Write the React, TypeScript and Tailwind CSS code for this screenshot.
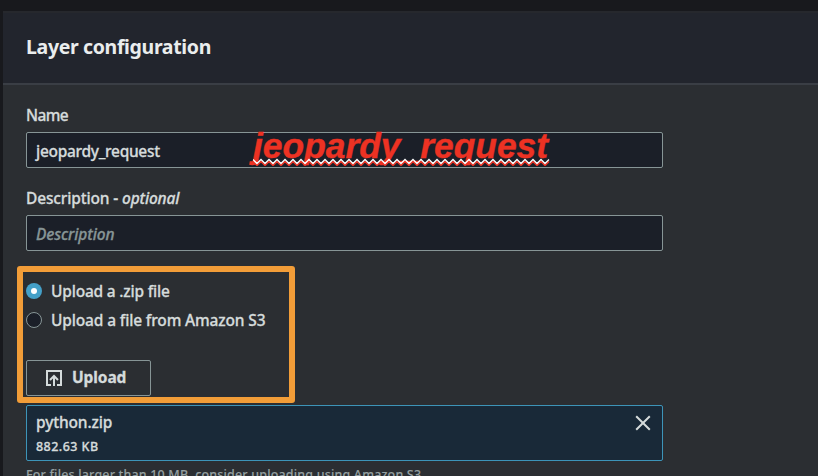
import React from 'react';

const squiggle = Array.from({ length: 75 }, (_, i) => `${i === 0 ? 'M' : 'L'}${i * 4} ${i % 2 === 0 ? 1.5 : 5.5}`).join(' ');

function UploadIcon() {
  return (
    <svg width="16" height="16" viewBox="0 0 16 16" fill="none" stroke="#d5dbdb" strokeWidth="2" className="block shrink-0">
      <path d="M5 15H1V1h14v14h-4" />
      <path d="M8 16V6M4 10l4-4 4 4" />
    </svg>
  );
}

export default function App() {
  return (
    <div className="relative h-[476px] w-[818px] overflow-hidden bg-[#18191d] pl-[3px] pt-[11px] font-['Noto_Sans',sans-serif] text-[#d5dbdb]">
      <section className="h-[465px] bg-[#2b2e32]">
        <header className="flex h-[74px] items-center border-b-2 border-t-2 border-b-[#3a3e45] border-t-[#26282d] bg-[#22252d] pb-[3px] pl-[23px]">
          <h2 className="whitespace-nowrap text-[19.5px] font-bold leading-6 tracking-[-0.35px] text-[#eaeded]">Layer configuration</h2>
        </header>
        <div className="flex w-[660px] flex-col pl-[23px] text-[15.5px] font-medium [-webkit-text-stroke:0.3px]">
          <label className="mt-[19px] h-[22px] leading-[22px] tracking-[-0.6px]">Name</label>
          <div className="mt-[6px] flex h-[36px] items-center rounded-[2px] border border-[#879596] bg-[#1b1f28] pl-[9px] pt-[3px]">
            <span className="tracking-[-0.3px]">jeopardy_request</span>
          </div>
          <label className="mt-[19px] h-[22px] whitespace-nowrap leading-[22px] tracking-[-0.15px]">
            Description - <i>optional</i>
          </label>
          <div className="mt-[6px] flex h-[36px] items-center rounded-[2px] border border-[#879596] bg-[#1b1f28] pl-[9px] pt-[3px]">
            <i className="tracking-[-0.1px] text-[#879596]">Description</i>
          </div>
          <div className="mt-[29px] flex h-[22px] items-center gap-[9px]">
            <span className="flex size-4 items-center justify-center rounded-full bg-[#44a0c8]">
              <span className="size-[6px] rounded-full bg-white" />
            </span>
            <span className="pt-px tracking-[-0.2px]">Upload a .zip file</span>
          </div>
          <div className="mt-[7px] flex h-[22px] items-center gap-[9px]">
            <span className="size-4 rounded-full border border-[#879596] bg-[#1b1f28]" />
            <span className="pt-px tracking-[-0.15px]">Upload a file from Amazon S3</span>
          </div>
          <button className="mt-[29px] flex h-[36px] w-[125px] items-center gap-[10px] rounded-[2px] border border-[#879596] pl-[19px] font-bold">
            <UploadIcon />
            <span className="-mt-px tracking-[-0.1px]">Upload</span>
          </button>
          <div className="mt-[9px] flex h-[56px] justify-between rounded-[2px] border border-[#3d94b8] bg-[#192938] pl-[9px] pr-[11px]">
            <div>
              <div className="mt-[5px] h-[22px] leading-[22px] tracking-[-0.15px]">python.zip</div>
              <div className="mt-[5px] h-[18px] text-[12.5px] leading-[18px] tracking-[0.45px]">882.63 KB</div>
            </div>
            <svg width="16" height="16" viewBox="0 0 16 16" stroke="#d5dbdb" strokeWidth="2" className="mt-[9px]">
              <path d="M1.2 1.2l13.6 13.6M14.8 1.2L1.2 14.8" />
            </svg>
          </div>
          <p className="mt-[5px] whitespace-nowrap text-[12.5px] leading-[18px] tracking-[0.17px] text-[#95a0a1] [-webkit-text-stroke:0.1px]">For files larger than 10 MB, consider uploading using Amazon S3.</p>
        </div>
      </section>
      <div className="absolute left-[248px] top-[125px] h-[41px] w-[310px] overflow-hidden font-['Liberation_Sans',Arial,sans-serif] text-[#ed3223]">
        <div className="pl-[5px] pt-[1px] text-[35.4px] font-bold italic leading-[40px] [-webkit-text-stroke:0.4px]">jeopardy_request</div>
        <svg width="300" height="8" viewBox="0 0 300 8" fill="none" className="absolute left-[5px] top-[33px]">
          <path d={squiggle} stroke="#ed3223" strokeWidth="1.5" transform="translate(0 2)" />
          <path d={squiggle} stroke="#fff" strokeWidth="1.3" />
        </svg>
      </div>
      <div className="absolute left-[17px] top-[266px] h-[137px] w-[278px] rounded-[3px] border-[6px] border-[#f29d38]" />
    </div>
  );
}
